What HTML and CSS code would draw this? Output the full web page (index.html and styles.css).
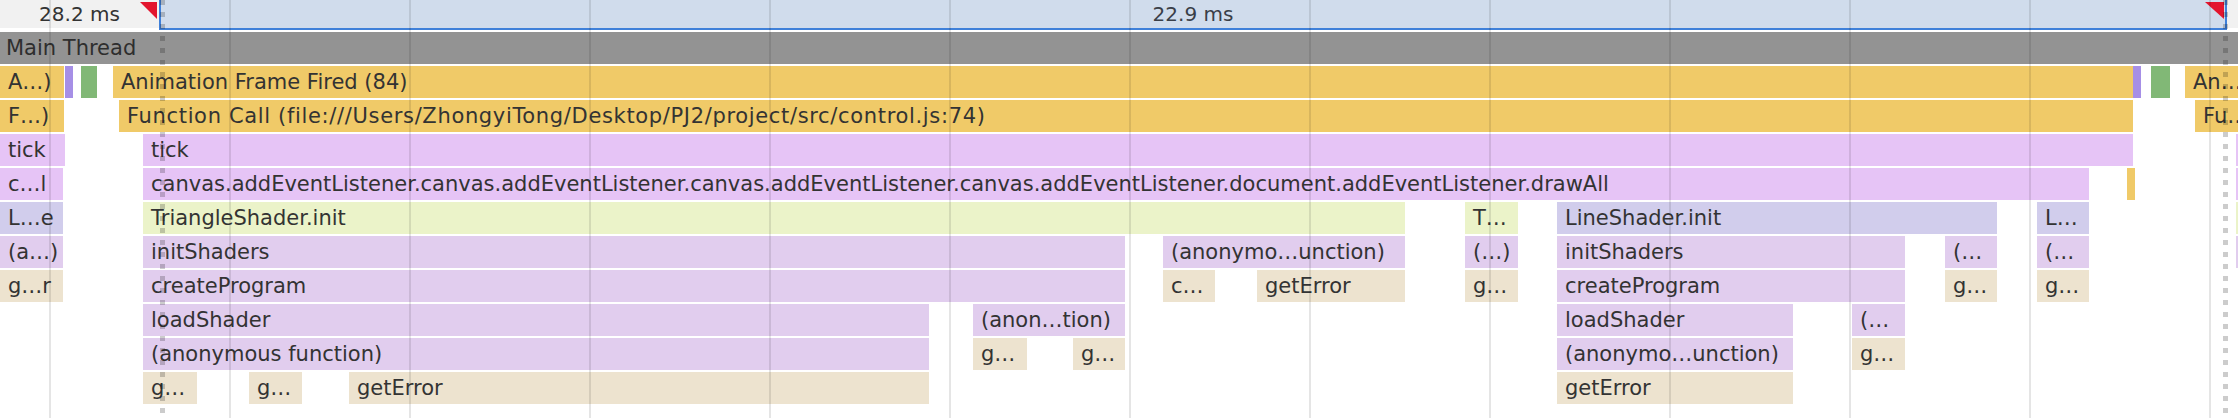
FILE: index.html
```html
<!DOCTYPE html>
<html lang="en">
<head>
<meta charset="utf-8">
<title>Flame chart</title>
<link rel="stylesheet" href="styles.css">
</head>
<body>
<div class="timeline">
  <div class="ruler">
    <div class="ruler-pre"><span>28.2 ms</span><i class="marker"></i></div>
    <div class="selection"><span>22.9 ms</span><i class="marker"></i></div>
    <div class="ruler-post"></div>
  </div>
  <div class="thread">Main Thread</div>

  <div class="row">
    <div class="bar script" style="left:0;width:64px">A…)</div>
    <div class="bar sliver" style="left:65px;width:4px"></div>
    <div class="bar paint" style="left:81px;width:16px"></div>
    <div class="bar script" style="left:113px;width:2020px">Animation Frame Fired (84)</div>
    <div class="bar sliver" style="left:2133px;width:4px"></div>
    <div class="bar paint" style="left:2151px;width:19px"></div>
    <div class="bar script" style="left:2185px;width:53px">An…</div>
  </div>

  <div class="row">
    <div class="bar script" style="left:0;width:64px">F…)</div>
    <div class="bar script url" style="left:119px;width:2014px">Function Call (file:///Users/ZhongyiTong/Desktop/PJ2/project/src/control.js:74)</div>
    <div class="bar script" style="left:2195px;width:43px">Fu…</div>
  </div>

  <div class="row">
    <div class="bar tick" style="left:0;width:65px">tick</div>
    <div class="bar tick" style="left:143px;width:1990px">tick</div>
    <div class="bar tick" style="left:2236px;width:2px"></div>
  </div>

  <div class="row">
    <div class="bar tick" style="left:0;width:63px">c…l</div>
    <div class="bar tick" style="left:143px;width:1946px">canvas.addEventListener.canvas.addEventListener.canvas.addEventListener.canvas.addEventListener.document.addEventListener.drawAll</div>
    <div class="bar script" style="left:2127px;width:2px"></div>
    <div class="bar tick" style="left:2236px;width:2px"></div>
  </div>

  <div class="row">
    <div class="bar line" style="left:0;width:63px">L…e</div>
    <div class="bar tri" style="left:143px;width:1262px">TriangleShader.init</div>
    <div class="bar tri" style="left:1465px;width:53px">T…</div>
    <div class="bar line" style="left:1557px;width:440px">LineShader.init</div>
    <div class="bar line" style="left:2037px;width:52px">L…</div>
    <div class="bar tri" style="left:2236px;width:2px"></div>
  </div>

  <div class="row">
    <div class="bar fn" style="left:0;width:63px">(a…)</div>
    <div class="bar fn" style="left:143px;width:982px">initShaders</div>
    <div class="bar fn" style="left:1163px;width:242px">(anonymo…unction)</div>
    <div class="bar fn" style="left:1465px;width:53px">(…)</div>
    <div class="bar fn" style="left:1557px;width:348px">initShaders</div>
    <div class="bar fn" style="left:1945px;width:52px">(…</div>
    <div class="bar fn" style="left:2037px;width:52px">(…</div>
    <div class="bar fn" style="left:2236px;width:2px"></div>
  </div>

  <div class="row">
    <div class="bar gl" style="left:0;width:63px">g…r</div>
    <div class="bar fn" style="left:143px;width:982px">createProgram</div>
    <div class="bar gl" style="left:1163px;width:52px">c…</div>
    <div class="bar gl" style="left:1257px;width:148px">getError</div>
    <div class="bar gl" style="left:1465px;width:53px">g…</div>
    <div class="bar fn" style="left:1557px;width:348px">createProgram</div>
    <div class="bar gl" style="left:1945px;width:52px">g…</div>
    <div class="bar gl" style="left:2037px;width:52px">g…</div>
  </div>

  <div class="row">
    <div class="bar fn" style="left:143px;width:786px">loadShader</div>
    <div class="bar fn" style="left:973px;width:152px">(anon…tion)</div>
    <div class="bar fn" style="left:1557px;width:236px">loadShader</div>
    <div class="bar fn" style="left:1852px;width:53px">(…</div>
  </div>

  <div class="row">
    <div class="bar fn" style="left:143px;width:786px">(anonymous function)</div>
    <div class="bar gl" style="left:973px;width:54px">g…</div>
    <div class="bar gl" style="left:1073px;width:52px">g…</div>
    <div class="bar fn" style="left:1557px;width:236px">(anonymo…unction)</div>
    <div class="bar gl" style="left:1852px;width:53px">g…</div>
  </div>

  <div class="row">
    <div class="bar gl" style="left:143px;width:54px">g…</div>
    <div class="bar gl" style="left:249px;width:53px">g…</div>
    <div class="bar gl" style="left:349px;width:580px">getError</div>
    <div class="bar gl" style="left:1557px;width:236px">getError</div>
  </div>

  <div class="grid"></div>
  <div class="cursor start"></div>
  <div class="cursor end"></div>
</div>
</body>
</html>
```

FILE: styles.css
```css
* { box-sizing: border-box; }

html, body {
  margin: 0;
  padding: 0;
  background: #ffffff;
}

body {
  width: 2238px;
  height: 418px;
  overflow: hidden;
  font-family: "DejaVu Sans", "Noto Sans", sans-serif;
  color: #333333;
}

.timeline {
  position: relative;
  width: 2238px;
  height: 418px;
}

/* ---- ruler ---- */
.ruler {
  display: flex;
  height: 30px;
  font-size: 20px;
  line-height: 28px;
}

.ruler-pre {
  position: relative;
  width: 159px;
  height: 28px;
  background: #f1f1f1;
  text-align: center;
}

.selection {
  position: relative;
  width: 2068px;
  height: 30px;
  background: #d0dcec;
  border-left: 2px solid #3f80d9;
  border-right: 2px solid #3f80d9;
  border-bottom: 2px solid #3f80d9;
  text-align: center;
  color: #3a3f48;
}

.ruler-post {
  flex: 1;
  height: 28px;
  background: #f1f1f1;
}

.marker {
  position: absolute;
  top: 2px;
  width: 0;
  height: 0;
  border-top: 17px solid #e3152e;
}

.ruler-pre .marker {
  right: 2px;
  border-left: 17px solid transparent;
}

.selection .marker {
  right: 1px;
  border-left: 19px solid transparent;
}

/* ---- main thread header ---- */
.thread {
  margin-top: 2px;
  height: 32px;
  background: #939393;
  font-size: 21px;
  line-height: 32px;
  padding-left: 6px;
  color: #2e2e2e;
}

/* ---- flame rows ---- */
.row {
  position: relative;
  height: 32px;
  margin-top: 2px;
}

.bar {
  position: absolute;
  top: 0;
  height: 32px;
  padding-left: 8px;
  font-size: 21px;
  line-height: 32px;
  white-space: nowrap;
  overflow: hidden;
  color: #333333;
}

.bar.url { letter-spacing: 0.66px; }

.script { background: #f0ca68; }
.sliver { background: #a68fe6; }
.paint  { background: #81b876; }
.tick   { background: #e6c4f6; }
.tri    { background: #ebf3c9; }
.line   { background: #d1cdec; }
.fn     { background: #e1cdee; }
.gl     { background: #ede3cf; }

/* ---- overlays ---- */
.grid {
  position: absolute;
  inset: 0;
  pointer-events: none;
  background: repeating-linear-gradient(90deg,
    transparent 0 49px,
    rgba(0, 0, 0, 0.1) 49px 51px,
    transparent 51px 180px);
}

.cursor {
  position: absolute;
  top: 0;
  bottom: 0;
  width: 5px;
  pointer-events: none;
  background: repeating-linear-gradient(180deg,
    rgba(0, 0, 0, 0.2) 0 5px,
    transparent 5px 12px);
}

.cursor.start { left: 160px; }
.cursor.end { left: 2223px; }
```
